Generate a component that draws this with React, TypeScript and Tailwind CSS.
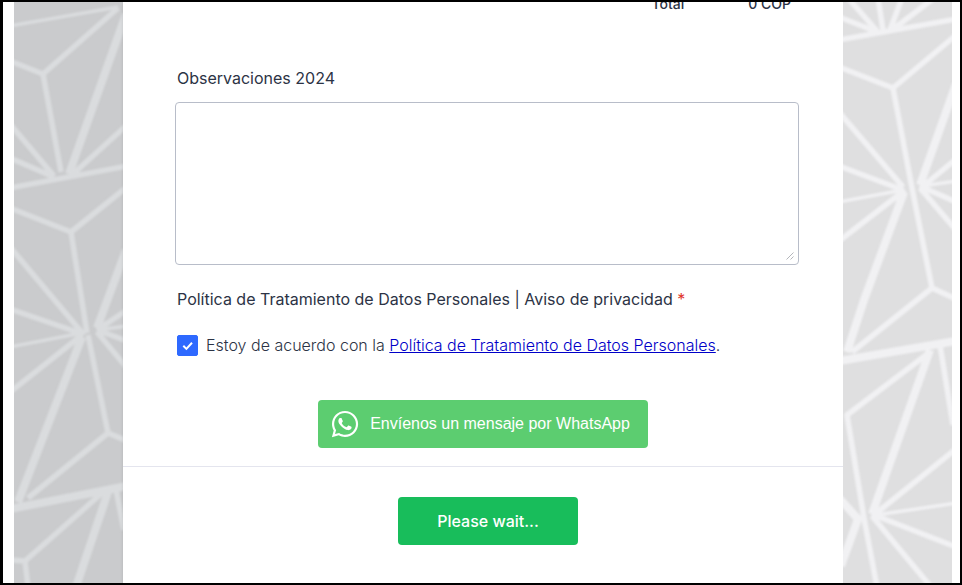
import { useState } from "react";
import { FaWhatsapp } from "react-icons/fa";

const leftThin =
  "M10 26L118 7M10 347L82 333M97 330L127 326";
const leftMid =
  "M118 8L43 74M10 61L43 74L61 172M10 124L54 176M10 158L54 177M127 125L73 174M10 188L127 166M10 208L71 232L127 187M71 232L87 333M10 247L84 335M10 309L80 333M10 392L82 335M88 335L108 433L127 441M108 433L28 498M102 493L25 561L10 560M25 561L28 587M116 490L124 530M97 330L127 310M97 330L127 341M97 332L127 368";
const leftThick =
  "M126 14L69 174M126 250L97 328M82 337L18 502M10 509L127 486M108 492L76 587";

const rightThin = "M839 202L903 190M956 181L922 186M956 503L876 515";
const rightMid =
  "M848 -2L877 31M839 17L875 31M878 -2L883 30M902 -2L890 30M934 -2L892 30M839 40L956 19M839 67L893 88L956 35M893 88L912 188L932 288L956 299M839 112L903 187M839 166L903 190M839 241L905 190M956 159L922 187L956 202M920 188L956 230M932 288L852 352M930 352L847 415L864 518L877 587M940 345L953 425M956 449L874 515L956 547M872 516L931 587";
const rightThick =
  "M956 84L920 185M904 192L864 300L847 352M839 361L956 341M930 350L872 514M839 498L858 519L841 566";

const Pattern = ({
  viewBox,
  thin,
  mid,
  thick,
  className,
}: {
  viewBox: string;
  thin: string;
  mid: string;
  thick: string;
  className: string;
}) => {
  return (
    <svg
      viewBox={viewBox}
      preserveAspectRatio="xMidYMin slice"
      className={className}
      fill="none"
      stroke="currentColor"
      strokeLinejoin="round"
      aria-hidden="true"
    >
      <g className="blur-[1px]">
        <path d={thin} strokeWidth="3.5" />
        <path d={mid} strokeWidth="5.5" />
        <path d={thick} strokeWidth="8" />
      </g>
    </svg>
  );
};

const App = () => {
  const [notes, setNotes] = useState("");
  const [accepted, setAccepted] = useState(true);

  return (
    <div className="flex min-h-screen border-2 border-l-3 border-black bg-white pl-[11px] pr-2 font-['Inter',sans-serif] text-[#2c3345]">
      <div className="flex min-w-0 flex-1 bg-[#cacbcd]">
        <Pattern
          viewBox="14 2 109 581"
          thin={leftThin}
          mid={leftMid}
          thick={leftThick}
          className="h-full w-full text-[#dadcde]"
        />
      </div>

      <main className="w-full max-w-[720px] bg-white shadow-sm">
        <form onSubmit={(ev) => ev.preventDefault()}>
          <div className="pr-11 pl-[52px]">
            <div className="flex h-3 items-end justify-end gap-16 overflow-hidden pr-2 text-sm leading-5 font-medium">
              <span>Total</span>
              <span>0 COP</span>
            </div>

            <label htmlFor="notes" className="mt-13 block pl-0.5 leading-6">
              Observaciones 2024
            </label>
            <div className="relative mt-3">
              <textarea
                id="notes"
                value={notes}
                onChange={(ev) => setNotes(ev.target.value)}
                className="block h-[163px] w-full resize-y rounded-sm border border-[#b8bdc9] p-2 [&::-webkit-resizer]:bg-transparent"
              />
              <svg
                viewBox="0 0 8 8"
                className="pointer-events-none absolute right-[5px] bottom-[5px] size-2"
                stroke="#b4b6bb"
                aria-hidden="true"
              >
                <path d="M0.5 7.5L7.5 0.5M4.5 7.5L7.5 4.5" />
              </svg>
            </div>

            <p className="mt-[22px] pl-0.5 leading-6">
              Política de Tratamiento de Datos Personales | Aviso de privacidad{" "}
              <span className="text-[#e0342b]">*</span>
            </p>
            <div className="mt-[22px] flex items-center gap-2 pl-0.5 leading-6">
              <span className="relative flex size-[21px]">
                <input
                  id="policy"
                  type="checkbox"
                  checked={accepted}
                  onChange={(ev) => setAccepted(ev.target.checked)}
                  className="size-full appearance-none rounded-xs border border-[#8894ab] checked:border-[#2e69ff] checked:bg-[#2e69ff]"
                />
                {accepted && (
                  <svg
                    viewBox="0 0 21 21"
                    className="pointer-events-none absolute inset-0"
                    fill="none"
                    stroke="white"
                    strokeWidth="2"
                  >
                    <path d="M6.3 10.8L9.4 13.9L15 7.8" />
                  </svg>
                )}
              </span>
              <label htmlFor="policy" className="font-light">
                Estoy de acuerdo con la{" "}
                <a href="#politica" className="text-[#0000c8] underline">
                  Política de Tratamiento de Datos Personales
                </a>
                .
              </label>
            </div>

            <div className="mt-[43px] flex justify-center pr-2">
              <a
                href="#whatsapp"
                className="flex h-12 items-center gap-2.5 rounded-sm bg-[#5ccd70] pr-[18px] pl-3 font-['Liberation_Sans',sans-serif] text-white"
              >
                <FaWhatsapp className="size-[30px]" />
                Envíenos un mensaje por WhatsApp
              </a>
            </div>
          </div>

          <div className="mt-[18px] flex justify-center border-t border-[#e4e5ee] pt-[30px] pb-[38px] pl-2.5">
            <button
              type="submit"
              className="h-12 w-[180px] rounded-sm bg-[#18bd5b] font-medium text-white"
            >
              Please wait...
            </button>
          </div>
        </form>
      </main>

      <div className="flex min-w-0 flex-1 bg-[#dfdfe0]">
        <Pattern
          viewBox="843 2 109 581"
          thin={rightThin}
          mid={rightMid}
          thick={rightThick}
          className="h-full w-full text-[#f1f1f3]"
        />
      </div>
    </div>
  );
};

export default App;
